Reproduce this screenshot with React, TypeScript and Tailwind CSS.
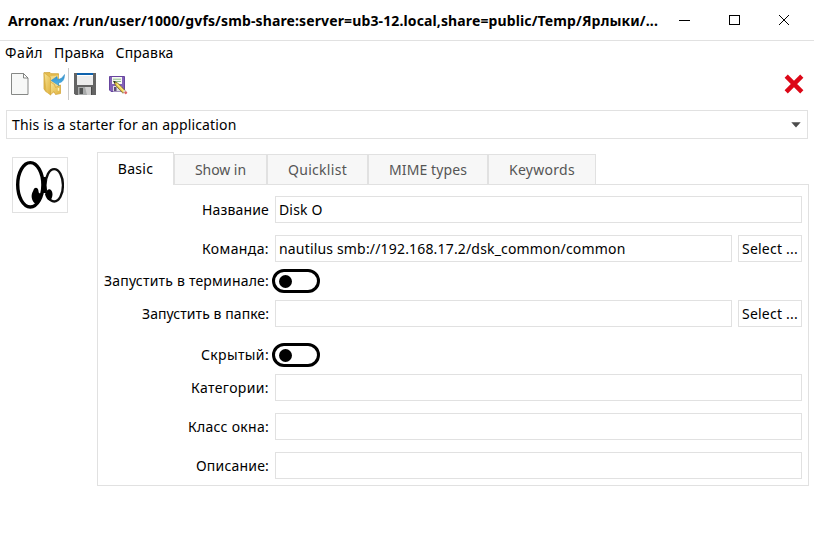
import { useLayoutEffect, useRef, useState } from "react";

/* Text set to a fixed advance width by spreading the difference between its letters. */
function Fit({ text, width, className = "" }: { text: string; width: number; className?: string }) {
  const ref = useRef<HTMLSpanElement>(null);
  const [spacing, setSpacing] = useState(0);
  useLayoutEffect(() => {
    const el = ref.current;
    if (!el) return;
    el.style.letterSpacing = "0px";
    const natural = el.getBoundingClientRect().width;
    const next = (width - natural) / text.length;
    el.style.letterSpacing = `${next}px`;
    setSpacing(next);
  }, [text, width]);
  return (
    <span ref={ref} className={`inline-block shrink-0 whitespace-pre ${className}`} style={{ letterSpacing: `${spacing}px` }}>
      {text}
    </span>
  );
}

function TitleBar() {
  return (
    <header className="flex h-[41px] items-center border-b border-[#e1e1e1] pl-2">
      <Fit
        text="Arronax: /run/user/1000/gvfs/smb-share:server=ub3-12.local,share=public/Temp/Ярлыки/..."
        width={650}
        className="pt-px text-[14px] font-bold"
      />
      <svg className="ml-[21px]" width="111" height="11" viewBox="0 0 111 11" shapeRendering="crispEdges" fill="none" stroke="#000">
        <path d="M0 5.5h11M50.5.5h10v9h-10z" />
        <path d="M100 0l10 10M110 0l-10 10" shapeRendering="auto" />
      </svg>
    </header>
  );
}

function MenuBar() {
  return (
    <nav className="flex h-[25px] items-center gap-[11px] pb-[2px] pl-[5px]">
      <Fit text="Файл" width={38} />
      <Fit text="Правка" width={50.5} />
      <Fit text="Справка" width={58} />
    </nav>
  );
}

function NewIcon() {
  return (
    <svg width="18" height="22" viewBox="0 0 18 22">
      <path d="M.5.5h12l4.5 4.5v16.5H.5z" fill="#f7f8f7" stroke="#868886" />
      <path d="M12.5.5V5H17z" fill="#fff" stroke="#777977" strokeWidth=".9" />
    </svg>
  );
}

function OpenIcon() {
  return (
    <svg width="22" height="24" viewBox="0 0 22 24">
      <defs>
        <linearGradient id="folder" x1="0" y1="0" x2="1" y2="1">
          <stop offset="0" stopColor="#f8e594" />
          <stop offset="1" stopColor="#dfb13d" />
        </linearGradient>
        <linearGradient id="arrow" x1="0" y1="0" x2="0" y2="1">
          <stop offset="0" stopColor="#2d8bc9" />
          <stop offset="1" stopColor="#54b9ec" />
        </linearGradient>
      </defs>
      <path d="M1 .7l6-.2 1 1.2h7.5v18H3L1 17z" fill="#e6bd4d" stroke="#cda339" strokeWidth=".8" />
      <path d="M7 4l8.5-1v17H6z" fill="#f3d987" stroke="#dbb64f" strokeWidth=".6" />
      <path d="M1 .7l6.5 4.8V23L3 19.5z" fill="url(#folder)" stroke="#d7ad42" strokeWidth=".7" />
      <path d="M7.5 10l4 2.5 1 3L17.5 13v8.5l-5 1-1.5-3-3.5 3.3z" fill="url(#folder)" stroke="#d5a840" strokeWidth=".8" />
      <path d="M15.5 16v2.8" stroke="#fff3bb" strokeWidth="1.4" />
      <path d="M21.5 2.5c0 5.5-2 7.8-6.2 8.5l1 2.8-8.2-5.3L14 4.5l.5 2.7c3 .2 5.2-1.7 7-4.7z" fill="url(#arrow)" stroke="#318dc4" strokeWidth=".5" />
    </svg>
  );
}

function SaveIcon() {
  return (
    <svg width="22" height="22" viewBox="0 0 22 22">
      <path d="M0 0h22v22H1.5L0 20.5z" fill="#646464" />
      <path d="M3 0h16v2H3z" fill="#0e62ad" />
      <path d="M3 2h16v10H3z" fill="#ececec" />
      <path d="M3 2h16v1H3z" fill="#fff" />
      <path d="M4 14h13v8H4z" fill="#a9abab" />
      <path d="M11 14h6v8h-4z" fill="#cfcfcf" />
      <path d="M5.5 15h3.5v6H5.5z" fill="#515353" />
      <path d="M17 14h1v8h-1z" fill="#484848" />
    </svg>
  );
}

function SaveAsIcon() {
  return (
    <svg width="19" height="19" viewBox="0 0 19 19">
      <path d="M.5.5h15v15H2L.5 14z" fill="#8261b7" stroke="#67459e" />
      <path d="M3 1h10v7H3z" fill="#f8f9f3" />
      <path d="M4 3.2h8M4 5.5h8" stroke="#8abb8a" />
      <path d="M4 10h8.5v5.5H4z" fill="#dedede" />
      <path d="M5 11h2.5v4H5z" fill="#5d4c7a" />
      <path d="M4.8 5.3l3.6 1.5 8 8-2.4 2.5-7.6-8.1z" fill="#e3c345" stroke="#63552c" strokeWidth=".7" />
      <path d="M7.8 7.8l7 7.3" stroke="#fff08a" strokeWidth="1.1" />
      <path d="M4.4 4.8l2.4.9-1.4 1.7z" fill="#292b20" />
      <path d="M14 15.8l2-2 1 1-2 2z" fill="#deded9" />
      <path d="M15 16.7l1.8-1.8 1.2 1.2c1 1-.9 2.7-1.8 1.8z" fill="#e06465" />
    </svg>
  );
}

function Toolbar() {
  return (
    <div className="flex h-9 items-center pr-[10px] pl-[11px]">
      <NewIcon />
      <span className="ml-[14px]"><OpenIcon /></span>
      <span className="ml-[3px] h-8 w-px bg-[#cacaca]" />
      <span className="ml-[5px]"><SaveIcon /></span>
      <span className="mt-[2px] ml-[13px]"><SaveAsIcon /></span>
      <svg className="ml-auto" width="20" height="20" viewBox="0 0 20 20">
        <path d="M2.2 2.2l15.6 15.6M17.8 2.2L2.2 17.8" stroke="#dc0717" strokeWidth="4.5" />
      </svg>
    </div>
  );
}

function EyesIcon() {
  return (
    <svg width="48" height="48" viewBox="0 0 48 48">
      <defs>
        <filter id="soft" x="-10%" y="-10%" width="120%" height="120%">
          <feGaussianBlur stdDeviation=".7" />
        </filter>
      </defs>
      <g filter="url(#soft)">
        <ellipse cx="38.2" cy="24.3" rx="8.8" ry="16.2" fill="#fff" stroke="#111" strokeWidth="2.4" />
        <ellipse cx="14.3" cy="23.8" rx="12.6" ry="22.2" fill="#fff" stroke="#000" strokeWidth="3.4" />
        <path d="M28.2 16v16" stroke="#000" strokeWidth="3.4" />
        <path d="M17.5 29c1-3 4.5-3 5 1 0 2 1 3 3.5 2-.5 5-3 10-6 11-3-1-4.8-6-4.3-9 .3-2 1.2-3.500 1.800-5z" fill="#000" />
        <path d="M30.500 31c1-4.500 5.800-3.500 6 2 0 3.500-1.500 6.500-3 6.500-1.500 0-3.500-3-4.500-6z" fill="#000" />
      </g>
    </svg>
  );
}

function Tabs() {
  const base = "flex h-[31px] items-center justify-center border border-[#e1e1e1] bg-[#f7f7f7] text-[#555]";
  return (
    <div className="relative z-10 -mb-px flex h-[33px] items-end self-start">
      <div className="flex h-[33px] w-[77px] items-center justify-center border border-b-0 border-[#e1e1e1] bg-white">
        <Fit text="Basic" width={35.5} />
      </div>
      <div className={`${base} w-[93px]`}><Fit text="Show in" width={51} /></div>
      <div className={`${base} w-[101px]`}><Fit text="Quicklist" width={59} /></div>
      <div className={`${base} w-[120px]`}><Fit text="MIME types" width={78} /></div>
      <div className={`${base} w-[108px]`}><Fit text="Keywords" width={66} /></div>
    </div>
  );
}

const field = "flex h-[27px] flex-1 items-center border border-[#e1e1e1] bg-white pl-[3px]";

function Row({ label, width, className = "", children }: { label: string; width: number; className?: string; children: React.ReactNode }) {
  return (
    <div className={`flex items-center ${className}`}>
      <div className="mr-[6px] flex w-[171px] shrink-0 justify-end">
        <Fit text={label} width={width} />
      </div>
      {children}
    </div>
  );
}

function SelectButton() {
  return (
    <button className="ml-[6px] flex h-[27px] w-[64px] items-center border border-[#e1e1e1] bg-white pl-[3px]">
      <Fit text="Select ..." width={56} />
    </button>
  );
}

function Toggle() {
  return (
    <div className="-ml-[3px] flex h-6 w-12 items-center rounded-full border-[3px] border-black pl-[4px]">
      <div className="size-[13px] rounded-full bg-black" />
    </div>
  );
}

export default function App() {
  return (
    <div className="h-[536px] w-[814px] overflow-hidden bg-white font-['Noto_Sans','Open_Sans',sans-serif] text-[14px] leading-5 text-black">
      <TitleBar />
      <MenuBar />
      <Toolbar />
      <div className="mx-[6px] mt-2 flex h-[29px] items-center justify-between border border-[#e1e1e1] pr-[6px] pl-[5px]">
        <Fit text="This is a starter for an application" width={224.5} />
        <svg width="10" height="6" viewBox="0 0 10 6">
          <path d="M.3.3h9.4L5 5.6z" fill="#4c4c4c" />
        </svg>
      </div>
      <main className="mt-[13px] flex pr-[5px] pl-3">
        <div className="mt-[5px] mr-[29px] flex size-14 shrink-0 items-center justify-center border border-[#e1e1e1]">
          <EyesIcon />
        </div>
        <section className="flex flex-1 flex-col">
          <Tabs />
          <div className="border border-[#e1e1e1] pt-[11px] pr-[6px] pb-[6px]">
            <Row label="Название" width={67}>
              <div className={field}><Fit text="Disk O" width={43.5} /></div>
            </Row>
            <Row label="Команда:" width={67} className="mt-3">
              <div className={field}><Fit text="nautilus smb://192.168.17.2/dsk_common/common" width={346.5} /></div>
              <SelectButton />
            </Row>
            <Row label="Запустить в терминале:" width={165} className="mt-[7px]"><Toggle /></Row>
            <Row label="Запустить в папке:" width={127} className="mt-[7px]">
              <div className={field} />
              <SelectButton />
            </Row>
            <Row label="Скрытый:" width={68} className="mt-4"><Toggle /></Row>
            <Row label="Категории:" width={78} className="mt-[7px]"><div className={field} /></Row>
            <Row label="Класс окна:" width={81} className="mt-3"><div className={field} /></Row>
            <Row label="Описание:" width={73} className="mt-3"><div className={field} /></Row>
          </div>
        </section>
      </main>
    </div>
  );
}
